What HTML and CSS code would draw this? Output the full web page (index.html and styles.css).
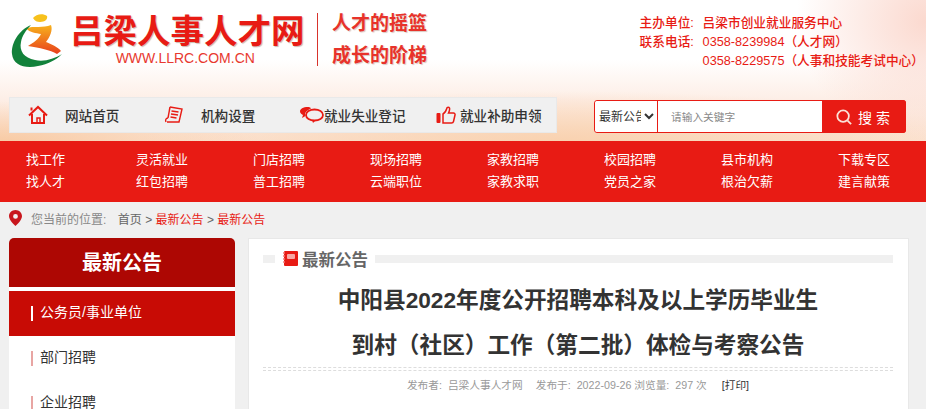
FILE: index.html
```html
<!DOCTYPE html>
<html lang="zh-CN">
<head>
<meta charset="UTF-8" />
<title>最新公告 | 吕梁人事人才网</title>
<link rel="stylesheet" href="styles.css">
</head>
<body>
<header class="top">
  <div class="brand-row">
    <a class="logo">
      <svg class="logo-mark" width="62" height="56" viewBox="0 0 62 56">
        <defs>
          <linearGradient id="fig" x1="0" y1="0" x2="0" y2="1">
            <stop offset="0" stop-color="#f7b21c"/>
            <stop offset="1" stop-color="#e8401c"/>
          </linearGradient>
        </defs>
        <path d="M23 5C26 1 33 0 37 3c1 3-2 6-7 6-3 0-5-1-7-4Z" fill="#f7c11c"/>
        <path d="M16 15C24 13 33 15 41 12c2 5-1 12-5 17 5 2 12 5 15 9l-4 3C40 37 30 35 18 33c5-3 11-7 13-12-5-1-11-1-15-6Z" fill="url(#fig)"/>
        <path d="M21 12C9 17 1 30 2 41c1 11 13 15 26 12 10-2 18-6 24-12-8 5-18 8-27 6-11-2-16-9-14-18 1-6 5-12 10-17Z" fill="#12813a"/>
      </svg>
      <div class="logo-text">
        <div class="logo-name">吕梁人事人才网</div>
        <div class="logo-url">WWW.LLRC.COM.CN</div>
      </div>
    </a>
    <div class="slogan">
      <div>人才的摇篮</div>
      <div>成长的阶梯</div>
    </div>
    <div class="contact">
      <div class="contact-row"><span class="contact-label">主办单位:</span><span>吕梁市创业就业服务中心</span></div>
      <div class="contact-row"><span class="contact-label">联系电话:</span><span>0358-8239984（人才网）</span></div>
      <div class="contact-row"><span class="contact-label"></span><span>0358-8229575（人事和技能考试中心）</span></div>
    </div>
  </div>
  <div class="tool-row">
    <div class="tools">
      <a class="tool">
        <svg class="tool-icon" width="20" height="20" viewBox="0 0 20 20" fill="none" stroke="#e81b14" stroke-width="2"><path d="M1 10.500 10 2l9 8.500"/><path d="M4 9v9h12V9"/><path d="M3.500 2.500v3"/><path d="M9 18v-5h3v5" stroke-width="1.500"/></svg>
        <span class="tool-gap">网站首页</span>
      </a>
      <a class="tool">
        <svg class="tool-icon" width="20" height="20" viewBox="0 0 20 20" fill="none" stroke="#e81b14" stroke-width="1.400"><path d="M6 2l12 2-3 13H3"/><path d="M6 2 4 13"/><path d="M4 13c-2 0-3 2-2 4"/><path d="M7.500 6l7 1M7 9l7 1M6.500 12l6 1"/></svg>
        <span class="tool-gap">机构设置</span>
      </a>
      <a class="tool">
        <svg class="tool-icon" width="24" height="18" viewBox="0 0 24 18"><path d="M8 1C3 1 0 3 0 5.500c0 2 2 3 3 3.500l-1 3 3.500-2C4 6 8 4 11 2.500 10.500 1.500 9.500 1 8 1Z" fill="#e81b14"/><ellipse cx="14.500" cy="9" rx="8.500" ry="5.500" fill="none" stroke="#e81b14" stroke-width="1.800"/><path d="M12 14l1 3 3-3" fill="#e81b14"/></svg>
        <span>就业失业登记</span>
      </a>
      <a class="tool">
        <svg class="tool-icon" width="20" height="18" viewBox="0 0 20 18"><rect x="0.500" y="7" width="4" height="10" rx="1" fill="#e81b14"/><path d="M7 8c2-1 3-3 4-6 0-1 2-1 2.500 0 .5 2-.5 4-1 5h5c1 0 1.800 1 1.500 2l-1.500 6.500c-.2.800-1 1.500-2 1.500H7Z" fill="none" stroke="#e81b14" stroke-width="1.500"/></svg>
        <span class="tool-last">就业补助申领</span>
      </a>
    </div>
    <form class="search">
      <select class="search-type">
        <option>最新公告</option>
      </select>
      <input class="search-input" type="text" placeholder="请输入关键字">
      <button class="search-btn" type="button">
        <svg width="16" height="16" viewBox="0 0 18 18" fill="none" stroke="#fbe3d8" stroke-width="2"><circle cx="8" cy="8" r="6.500"/><path d="M13 13l4 4"/></svg>
        <span>搜 索</span>
      </button>
    </form>
  </div>
</header>

<nav class="main-nav">
  <a>找工作</a><a>灵活就业</a><a>门店招聘</a><a>现场招聘</a><a>家教招聘</a><a>校园招聘</a><a>县市机构</a><a>下载专区</a>
  <a>找人才</a><a>红包招聘</a><a>普工招聘</a><a>云端职位</a><a>家教求职</a><a>党员之家</a><a>根治欠薪</a><a>建言献策</a>
</nav>

<div class="crumbs">
  <svg width="13" height="16" viewBox="0 0 13 16"><path fill-rule="evenodd" d="M6.500 0C2.900 0 0 2.800 0 6.300 0 10.500 6.500 16 6.500 16S13 10.500 13 6.300C13 2.800 10.100 0 6.500 0Zm0 4a2.400 2.400 0 1 1 0 4.800 2.400 2.400 0 0 1 0-4.800Z" fill="#c8161d"/></svg>
  <span class="crumb-label">您当前的位置:</span>
  <span class="crumb-home">首页 &gt; <em>最新公告</em> &gt; <em>最新公告</em></span>
</div>

<div class="content">
  <aside class="side">
    <h2>最新公告</h2>
    <ul>
      <li class="active">公务员/事业单位</li>
      <li>部门招聘</li>
      <li>企业招聘</li>
    </ul>
  </aside>
  <main class="article">
    <div class="article-head">
      <i class="bar-short"></i>
      <svg width="15" height="15" viewBox="0 0 15 15"><rect x="1" y="0" width="14" height="15" rx="1" fill="#e81b14"/><rect x="4" y="3" width="8" height="5" rx="1" fill="#f7a8a4"/><path d="M0 2h2M0 5h2M0 8h2M0 11h2" stroke="#f47a74" stroke-width="1.500"/></svg>
      <span>最新公告</span>
      <i class="bar-long"></i>
    </div>
    <h1>中阳县2022年度公开招聘本科及以上学历毕业生<br>到村（社区）工作（第二批）体检与考察公告</h1>
    <div class="article-rule"></div>
    <div class="meta">
      <span>发布者:&nbsp; 吕梁人事人才网</span>
      <span class="meta-gap">发布于:&nbsp; 2022-09-26 浏览量:&nbsp; 297 次</span>
      <a class="print">[打印]</a>
    </div>
  </main>
</div>
</body>
</html>
```
FILE: styles.css
```css
* {
  box-sizing: border-box;
}
html, body {
  height: 409px;
  overflow: hidden;
}
body {
  margin: 0;
  font-family: "Liberation Sans", "Noto Sans CJK SC", sans-serif;
  font-size: 12px;
  background: #f0f0f0;
  color: #333;
}
a {
  text-decoration: none;
  color: inherit;
}
.top {
  height: 141px;
  background:
    radial-gradient(ellipse 130px 120px at 100% 15%, #fbd9cf 0%, rgba(251,217,207,0) 100%),
    radial-gradient(ellipse 420px 50px at 560px 141px, #f9d2b0 0%, rgba(249,210,176,0) 100%),
    radial-gradient(ellipse 260px 40px at 0 141px, #f8cba5 0%, rgba(248,203,165,0) 100%),
    linear-gradient(#fff 0, #fff 60px, #fdeee6 100px, #fbe3d2 141px);
}
.brand-row {
  height: 97px;
  display: flex;
  align-items: flex-start;
  padding-left: 10px;
}
.logo {
  display: flex;
  width: 307px;
  padding-top: 13px;
}
.logo-mark {
  flex: none;
}
.logo-text {
  margin-left: -2px;
  text-align: center;
}
.logo-name {
  font-size: 33.500px;
  line-height: 37px;
  font-weight: 700;
  color: #e81b14;
  white-space: nowrap;
  text-shadow: 1px 1px 1px #c9b8b0;
}
.logo-url {
  margin-right: 4px;
  font-size: 14px;
  line-height: 16px;
  color: #e8392f;
}
.slogan {
  margin-top: 13px;
  height: 53px;
  border-left: 1px solid #d8332c;
  padding: 1px 0 0 14px;
  font-size: 19px;
  font-weight: 700;
  line-height: 20px;
  color: #e8322a;
  text-shadow: 1px 1px 1px #d9c8c0;
  display: flex;
  flex-direction: column;
  justify-content: space-between;
}
.contact {
  margin-left: auto;
  margin-right: 2px;
  padding-top: 14px;
  font-size: 12.700px;
  font-weight: 500;
  line-height: 19px;
  color: #e81b14;
}
.contact-row {
  display: flex;
  white-space: nowrap;
}
.contact-label {
  width: 63px;
}
.tool-row {
  display: flex;
  align-items: flex-start;
  padding-left: 9px;
}
.tools {
  width: 548px;
  height: 36px;
  flex: none;
  background: #f0f0f0;
  border: 1px solid #e9e9e9;
  display: grid;
  grid-template-columns: repeat(3, 136px) 1fr;
  padding-left: 18px;
}
.tool {
  display: flex;
  align-items: center;
  font-size: 13.600px;
  font-weight: 500;
  color: #333;
  white-space: nowrap;
}
.tool-icon {
  flex: none;
}
.tool-gap {
  margin-left: 17px;
}
.tool-last {
  margin-left: 4px;
}
.search {
  margin: 3px 0 0 37px;
  width: 312px;
  height: 33px;
  display: flex;
  background: #fff;
  border: 1px solid #e81b14;
  border-radius: 3px;
}
.search-type {
  width: 63px;
  flex: none;
  border: 0;
  border-right: 1px solid #e81b14;
  border-radius: 3px 0 0 3px;
  background: #fff;
  padding: 0;
  font-family: inherit;
  font-size: 12px;
  color: #333;
  outline: none;
}
.search-input {
  flex: 1;
  min-width: 0;
  border: 0;
  outline: none;
  padding: 0 0 0 13px;
  font-family: inherit;
  font-size: 10.700px;
  background: transparent;
}
.search-input::placeholder {
  color: #888;
}
.search-btn {
  width: 84px;
  margin: -1px -1px -1px 0;
  flex: none;
  border: 0;
  padding: 0 2px 0 0;
  background: #e81b14;
  border-radius: 0 3px 3px 0;
  display: flex;
  align-items: center;
  justify-content: center;
  gap: 6px;
  font-family: inherit;
  color: #fff;
  font-size: 14px;
}
.main-nav {
  height: 61px;
  background: #e81b14;
  display: grid;
  grid-template-columns: 110px repeat(7, 117px);
  grid-auto-rows: 22px;
  padding: 8px 0 0 26px;
  color: #fff;
  font-size: 13px;
  line-height: 22px;
}
.crumbs {
  height: 36px;
  display: flex;
  align-items: center;
  padding: 0 0 4px 9px;
  color: #888;
  font-size: 12px;
}
.crumb-label {
  margin-left: 9px;
}
.crumb-home {
  margin-left: 11.500px;
  color: #666;
}
.crumb-home em {
  font-style: normal;
  color: #e81b14;
}
.content {
  display: flex;
  align-items: flex-start;
  gap: 13px;
  padding-left: 9px;
}
.side {
  width: 226px;
  background: #fff;
  border-radius: 5px 5px 0 0;
  flex: none;
}
.side h2 {
  margin: 0;
  height: 49px;
  background: #ad0703;
  border-radius: 5px 5px 0 0;
  color: #fff;
  font-size: 20px;
  line-height: 50px;
  text-align: center;
}
.side ul {
  list-style: none;
  margin: 4px 0 0;
  padding: 0;
}
.side li {
  height: 45px;
  line-height: 43px;
  padding-left: 31px;
  font-size: 14px;
  color: #333;
  position: relative;
}
.side li::before {
  content: "";
  position: absolute;
  left: 22px;
  top: 15px;
  width: 2px;
  height: 15px;
  background: #e8a5a3;
}
.side li.active {
  background: #c80b05;
  color: #fff;
}
.side li.active::before {
  background: #fff;
}
.article {
  width: 661px;
  height: 300px;
  background: #fff;
  border: 1px solid #e8e8e8;
  border-bottom: 0;
  padding: 0 15px 0 14px;
}
.article-head {
  display: flex;
  align-items: center;
  height: 38px;
  padding-top: 1px;
  font-size: 16.500px;
  font-weight: 700;
  color: #666;
}
.article-head svg {
  margin: 0 4px 0 8px;
  flex: none;
}
.article-head i {
  height: 8px;
  background: #f0f0f0;
}
.bar-short {
  width: 12px;
}
.bar-long {
  flex: 1;
  margin-left: 7px;
}
.article h1 {
  margin: 0;
  padding-top: 1px;
  font-size: 22.650px;
  line-height: 45px;
  font-weight: 700;
  color: #333;
  text-align: center;
}
.article-rule {
  height: 4px;
  margin-top: -1px;
  border-top: 1px dashed #ddd;
  border-bottom: 1px dashed #ddd;
}
.meta {
  margin-top: 4px;
  text-align: center;
  color: #999;
  font-size: 10.700px;
  line-height: 20px;
}
.meta-gap {
  margin-left: 10px;
}
.print {
  margin-left: 12px;
  color: #333;
}
```
